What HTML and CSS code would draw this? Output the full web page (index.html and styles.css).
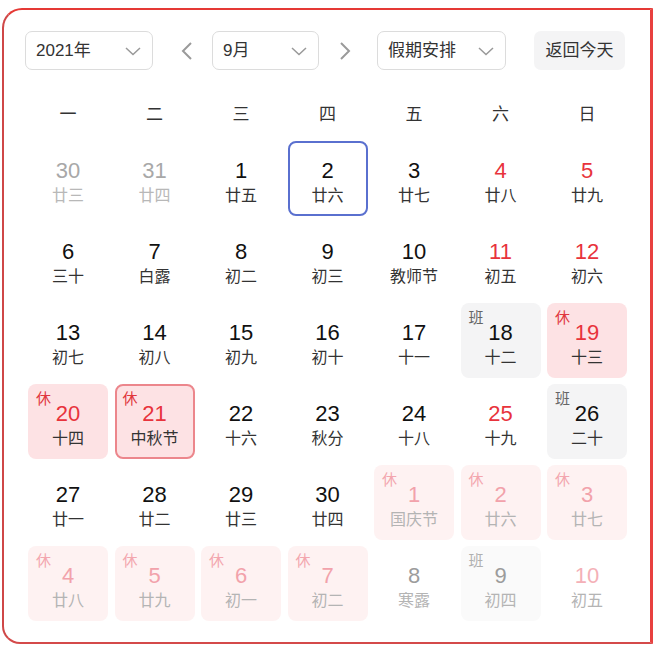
FILE: index.html
```html
<!DOCTYPE html>
<html lang="zh-CN">
<head>
<meta charset="utf-8">
<title>万年历</title>
<link rel="stylesheet" href="styles.css">
</head>
<body>
<div class="frame">
  <div class="toolbar">
    <div class="select sel-year"><span>2021年</span><svg class="chev" width="16" height="9" viewBox="0 0 16 9"><polyline points="1,1 8,7.5 15,1" fill="none" stroke="#999" stroke-width="1.5"/></svg></div>
    <div class="arrow arrow-prev"><svg width="11" height="18" viewBox="0 0 11 18"><polyline points="10,1 2,9 10,17" fill="none" stroke="#9a9a9a" stroke-width="2"/></svg></div>
    <div class="select sel-month"><span>9月</span><svg class="chev" width="16" height="9" viewBox="0 0 16 9"><polyline points="1,1 8,7.5 15,1" fill="none" stroke="#999" stroke-width="1.5"/></svg></div>
    <div class="arrow arrow-next"><svg width="11" height="18" viewBox="0 0 11 18"><polyline points="1,1 9,9 1,17" fill="none" stroke="#9a9a9a" stroke-width="2"/></svg></div>
    <div class="select sel-holiday"><span>假期安排</span><svg class="chev" width="16" height="9" viewBox="0 0 16 9"><polyline points="1,1 8,7.5 15,1" fill="none" stroke="#999" stroke-width="1.5"/></svg></div>
    <div class="today-btn">返回今天</div>
  </div>

  <div class="weekdays">
    <div>一</div><div>二</div><div>三</div><div>四</div><div>五</div><div>六</div><div>日</div>
  </div>

  <div class="days">
    <div class="cell other"><div class="num">30</div><div class="lunar">廿三</div></div>
    <div class="cell other"><div class="num">31</div><div class="lunar">廿四</div></div>
    <div class="cell"><div class="num">1</div><div class="lunar">廿五</div></div>
    <div class="cell selected"><div class="num">2</div><div class="lunar">廿六</div></div>
    <div class="cell"><div class="num">3</div><div class="lunar">廿七</div></div>
    <div class="cell weekend"><div class="num">4</div><div class="lunar">廿八</div></div>
    <div class="cell weekend"><div class="num">5</div><div class="lunar">廿九</div></div>

    <div class="cell"><div class="num">6</div><div class="lunar">三十</div></div>
    <div class="cell"><div class="num">7</div><div class="lunar">白露</div></div>
    <div class="cell"><div class="num">8</div><div class="lunar">初二</div></div>
    <div class="cell"><div class="num">9</div><div class="lunar">初三</div></div>
    <div class="cell"><div class="num">10</div><div class="lunar">教师节</div></div>
    <div class="cell weekend"><div class="num">11</div><div class="lunar">初五</div></div>
    <div class="cell weekend"><div class="num">12</div><div class="lunar">初六</div></div>

    <div class="cell"><div class="num">13</div><div class="lunar">初七</div></div>
    <div class="cell"><div class="num">14</div><div class="lunar">初八</div></div>
    <div class="cell"><div class="num">15</div><div class="lunar">初九</div></div>
    <div class="cell"><div class="num">16</div><div class="lunar">初十</div></div>
    <div class="cell"><div class="num">17</div><div class="lunar">十一</div></div>
    <div class="cell work"><span class="badge">班</span><div class="num">18</div><div class="lunar">十二</div></div>
    <div class="cell rest"><span class="badge">休</span><div class="num">19</div><div class="lunar">十三</div></div>

    <div class="cell rest"><span class="badge">休</span><div class="num">20</div><div class="lunar">十四</div></div>
    <div class="cell rest festival"><span class="badge">休</span><div class="num">21</div><div class="lunar">中秋节</div></div>
    <div class="cell"><div class="num">22</div><div class="lunar">十六</div></div>
    <div class="cell"><div class="num">23</div><div class="lunar">秋分</div></div>
    <div class="cell"><div class="num">24</div><div class="lunar">十八</div></div>
    <div class="cell weekend"><div class="num">25</div><div class="lunar">十九</div></div>
    <div class="cell work"><span class="badge">班</span><div class="num">26</div><div class="lunar">二十</div></div>

    <div class="cell"><div class="num">27</div><div class="lunar">廿一</div></div>
    <div class="cell"><div class="num">28</div><div class="lunar">廿二</div></div>
    <div class="cell"><div class="num">29</div><div class="lunar">廿三</div></div>
    <div class="cell"><div class="num">30</div><div class="lunar">廿四</div></div>
    <div class="cell next rest"><span class="badge">休</span><div class="num">1</div><div class="lunar">国庆节</div></div>
    <div class="cell next rest"><span class="badge">休</span><div class="num">2</div><div class="lunar">廿六</div></div>
    <div class="cell next rest"><span class="badge">休</span><div class="num">3</div><div class="lunar">廿七</div></div>

    <div class="cell next rest"><span class="badge">休</span><div class="num">4</div><div class="lunar">廿八</div></div>
    <div class="cell next rest"><span class="badge">休</span><div class="num">5</div><div class="lunar">廿九</div></div>
    <div class="cell next rest"><span class="badge">休</span><div class="num">6</div><div class="lunar">初一</div></div>
    <div class="cell next rest"><span class="badge">休</span><div class="num">7</div><div class="lunar">初二</div></div>
    <div class="cell next"><div class="num">8</div><div class="lunar">寒露</div></div>
    <div class="cell next work"><span class="badge">班</span><div class="num">9</div><div class="lunar">初四</div></div>
    <div class="cell next weekend"><div class="num">10</div><div class="lunar">初五</div></div>
  </div>
</div>
</body>
</html>
```

FILE: styles.css
```css
html, body {
  margin: 0;
  padding: 0;
  background: #fff;
}

body {
  font-family: "Liberation Sans", "Noto Sans CJK SC", sans-serif;
  color: #222;
}

.frame {
  box-sizing: border-box;
  margin: 8px 0 0 2px;
  width: 651px;
  height: 636px;
  border: 2px solid #e53935;
  border-left-color: #cf4747;
  border-bottom-color: #d44a4a;
  border-right: 3px solid #e8403f;
  border-radius: 20px 0 0 18px;
  padding: 21px 23px 0 21px;
}

.toolbar {
  display: flex;
  align-items: center;
  height: 39px;
}

.select {
  box-sizing: border-box;
  height: 39px;
  border: 1px solid #dcdcdc;
  border-radius: 7px;
  display: flex;
  align-items: center;
  justify-content: space-between;
  padding: 0 11px 0 10px;
  font-size: 17px;
  color: #333;
}

.select span {
  line-height: 20px;
}

.sel-year { width: 128px; }
.sel-month { width: 107px; }
.sel-holiday { width: 129px; }

.chev {
  display: block;
  margin-top: 1px;
}

.arrow {
  display: flex;
  align-items: center;
}

.arrow svg { display: block; }

.arrow-prev { margin: 0 20px 0 28px; }
.arrow-next { margin: 0 26px 0 21px; }

.today-btn {
  margin-left: 28px;
  width: 91px;
  height: 39px;
  box-sizing: border-box;
  background: #f4f4f5;
  border-radius: 7px;
  font-size: 17px;
  color: #333;
  display: flex;
  align-items: center;
  justify-content: center;
  line-height: 20px;
}

.weekdays {
  margin: 26px 0 0 3px;
  width: 599px;
  display: grid;
  grid-template-columns: repeat(7, 80px);
  column-gap: 6.5px;
  height: 38px;
  align-items: center;
}

.weekdays div {
  text-align: center;
  font-size: 17px;
  line-height: 20px;
  color: #333;
}

.days {
  margin: 7px 0 0 3px;
  width: 599px;
  display: grid;
  grid-template-columns: repeat(7, 80px);
  grid-auto-rows: 75px;
  column-gap: 6.5px;
  row-gap: 6px;
}

.cell {
  position: relative;
  box-sizing: border-box;
  border-radius: 8px;
  padding-top: 16.5px;
  text-align: center;
}

.num {
  font-size: 22px;
  line-height: 26px;
  color: #111;
}

.lunar {
  margin-top: 2.5px;
  font-size: 16px;
  line-height: 20px;
  color: #333;
}

.badge {
  position: absolute;
  left: 8px;
  top: 6px;
  font-size: 15px;
  line-height: 18px;
}

.other .num { color: #a8a8a8; }
.other .lunar { color: #b8b8b8; }

.weekend .num { color: #e8333c; }

.selected {
  border: 2px solid #5a70cf;
  padding-top: 14.5px;
}

.work { background: #f4f4f5; }
.work .badge { color: #666; }

.rest { background: #fde2e4; }
.rest .num { color: #e8333c; }
.rest .badge { color: #e0363d; }

.festival {
  border: 2px solid #ec868c;
  padding-top: 14.5px;
}
.festival .badge { left: 6px; top: 4px; }

.next .num { color: #9c9c9c; }
.next .lunar { color: #b4b4b4; }

.next.rest { background: #fef2f2; }
.next.rest .num { color: #f2a2ab; }
.next.rest .badge { color: #f3a6ae; }

.next.work { background: #fafafa; }
.next.work .badge { color: #b0b0b0; }

.next.weekend .num { color: #f4b0b7; }
```
